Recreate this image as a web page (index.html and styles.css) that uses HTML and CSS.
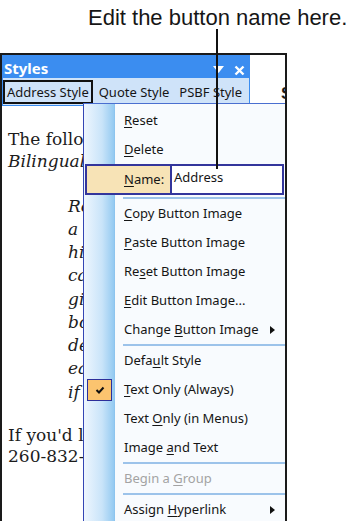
FILE: index.html
```html
<!DOCTYPE html>
<html lang="en">
<head>
  <meta charset="utf-8" />
  <meta name="viewport" content="width=device-width, initial-scale=1.0" />
  <title>Edit the button name</title>
  <link rel="stylesheet" href="styles.css">
</head>
<body>
  <p class="callout">Edit the button name here.</p>
  <div class="callout-line"></div>

  <div class="window">
    <!-- document behind the floating toolbar -->
    <div class="doc">
      <h2 class="doc-title">Spring Reading Program</h2>
      <p>The following excerpt comes from the<br><i>Bilingual Reader's Guide</i>:</p>
      <blockquote>
        Rosa reads aloud every night,<br>
        a habit she learned from<br>
        his grandmother, who<br>
        came from a village where<br>
        giving stories to children<br>
        both in Spanish and English<br>
        defined a good upbringing. Now<br>
        each story she reads is a gift,<br>
        if only for a moment.
      </blockquote>
      <p>If you'd like more information, call<br>260-832-1234.</p>
    </div>

    <div class="toolbar">
      <div class="toolbar-title">
        <span>Styles</span>
        <svg class="title-icons" viewBox="0 0 36 23" aria-hidden="true">
          <polygon points="1,11 12,11 6.5,18" fill="#fff" />
          <path d="M23.5 11.5 L31.5 19.5 M31.5 11.5 L23.5 19.5" stroke="#fff" stroke-width="2.4" />
        </svg>
      </div>
      <div class="toolbar-buttons">
        <span class="tb-btn is-selected">Address Style</span>
        <span class="tb-btn">Quote Style</span>
        <span class="tb-btn">PSBF Style</span>
      </div>
    </div>

    <ul class="menu">
      <li class="menu-item"><span></span><span class="label"><u>R</u>eset</span></li>
      <li class="menu-item"><span></span><span class="label"><u>D</u>elete</span></li>
      <li class="menu-item name-row">
        <span></span>
        <span class="label"><u>N</u>ame:</span>
        <span class="name-input">Address</span>
      </li>
      <li class="menu-sep"></li>
      <li class="menu-item"><span></span><span class="label"><u>C</u>opy Button Image</span></li>
      <li class="menu-item"><span></span><span class="label"><u>P</u>aste Button Image</span></li>
      <li class="menu-item"><span></span><span class="label">Re<u>s</u>et Button Image</span></li>
      <li class="menu-item"><span></span><span class="label"><u>E</u>dit Button Image...</span></li>
      <li class="menu-item">
        <span></span>
        <span class="label">Change <u>B</u>utton Image</span>
        <svg class="sub-arrow" viewBox="0 0 5 8" aria-hidden="true"><polygon points="0,0 5,4 0,8" /></svg>
      </li>
      <li class="menu-sep"></li>
      <li class="menu-item"><span></span><span class="label">Defa<u>u</u>lt Style</span></li>
      <li class="menu-item">
        <span class="check">
          <svg viewBox="0 0 10 8" aria-hidden="true"><path d="M1.5 4 L4 6.5 L8.5 1.5" fill="none" stroke="#111" stroke-width="2" /></svg>
        </span>
        <span class="label"><u>T</u>ext Only (Always)</span>
      </li>
      <li class="menu-item"><span></span><span class="label">Text <u>O</u>nly (in Menus)</span></li>
      <li class="menu-item"><span></span><span class="label">Image <u>a</u>nd Text</span></li>
      <li class="menu-sep"></li>
      <li class="menu-item is-disabled"><span></span><span class="label">Begin a <u>G</u>roup</span></li>
      <li class="menu-sep"></li>
      <li class="menu-item">
        <span></span>
        <span class="label">Assign <u>H</u>yperlink</span>
        <svg class="sub-arrow" viewBox="0 0 5 8" aria-hidden="true"><polygon points="0,0 5,4 0,8" /></svg>
      </li>
    </ul>
  </div>
</body>
</html>
```

FILE: styles.css
```css
/* Base */
body {
  margin: 0;
  position: relative;
  height: 521px;
  overflow: hidden;
  background: #fff;
  color: #151515;
  font-family: "Noto Sans", sans-serif;
}

/* Callout */
.callout {
  margin: 0;
  padding: 5px 0 0 88px;
  font: 22px/26px "Liberation Sans", Arial, sans-serif;
  color: #161616;
}

.callout-line {
  position: absolute;
  left: 216px;
  top: 29px;
  width: 2px;
  height: 140px;
  background: #111;
  z-index: 5;
}

/* Word window */
.window {
  position: relative;
  margin-top: 22px;
  width: 283px;
  height: 470px;
  border: 2px solid #1a1a1a;
  border-bottom: none;
  overflow: hidden;
}

.doc {
  padding: 29px 0 0 6px;
  font-family: "DejaVu Serif", serif;
  font-size: 17px;
  line-height: 22px;
  white-space: nowrap;
  color: #1c1c1c;
}

.doc-title {
  margin: 0;
  padding-left: 273px;
  font: bold 17px/20px "Liberation Sans", Arial, sans-serif;
}

.doc p {
  margin: 24px 0 0;
}

.doc blockquote {
  margin: 22.6px 0 0 60px;
  line-height: 23.25px;
  font-style: italic;
}

.doc blockquote + p {
  margin-top: 21px;
  line-height: 21px;
}

/* Floating toolbar */
.toolbar {
  position: absolute;
  left: 0;
  top: 0;
  width: 246px;
  height: 50px;
  background: #cfe3f9;
  border: 1px solid #3b8df0;
  border-top: none;
}

.toolbar-title {
  display: flex;
  justify-content: space-between;
  height: 23px;
  background: #3b8df0;
  color: #fff;
  font-size: 15px;
  font-weight: bold;
}

.toolbar-title span {
  padding: 4px 0 0 1px;
  line-height: 19px;
}

.title-icons {
  width: 36px;
  height: 23px;
  margin-right: 1px;
}

.toolbar-buttons {
  display: flex;
  gap: 2px;
  padding-top: 2px;
  font-size: 13px;
}

.tb-btn {
  padding: 0 2px;
  line-height: 20px;
  border: 2px solid transparent;
}

.tb-btn.is-selected {
  border-color: #111;
}

/* Context menu */
.menu {
  position: absolute;
  left: 81px;
  top: 48px;
  width: 201px;
  height: 430px;
  margin: 0;
  padding: 2px 0 0;
  list-style: none;
  border-top: 1px solid #4a6fd0;
  border-left: 1px solid #3446b4;
  background: linear-gradient(to right, #eef6fe 0, #c9e4f9 18px, #94caf1 30px, #86bfec 31px, #f8fbfe 31px);
  font-size: 13px;
}

.menu-item {
  display: grid;
  grid-template-columns: 31px 1fr 20px;
  align-items: center;
  height: 29px;
  line-height: 29px;
}

.menu-item .label {
  padding-left: 9px;
}

.menu-item u {
  text-underline-offset: 2px;
}

.menu-item.is-disabled {
  color: #a3a3a3;
}

.sub-arrow {
  width: 5px;
  height: 8px;
  margin-left: 5px;
  fill: #111;
}

.name-row {
  grid-template-columns: 28px 55px 1fr;
  height: 27px;
  line-height: 23px;
  margin: 0 1px 2px;
  border: 2px solid #33359c;
  background: #f7e3b6;
}

.name-input {
  align-self: stretch;
  padding-left: 2px;
  background: #fff;
  border-left: 2px solid #33359c;
}

.menu-sep {
  height: 2px;
  margin-left: 39px;
  background: #9cc3ea;
}

.check {
  display: flex;
  align-items: center;
  justify-content: center;
  width: 23px;
  height: 20px;
  margin-left: 3px;
  background: #fbc46f;
  border: 1px solid #2d2f9a;
}

.check svg {
  width: 10px;
  height: 8px;
}
```
